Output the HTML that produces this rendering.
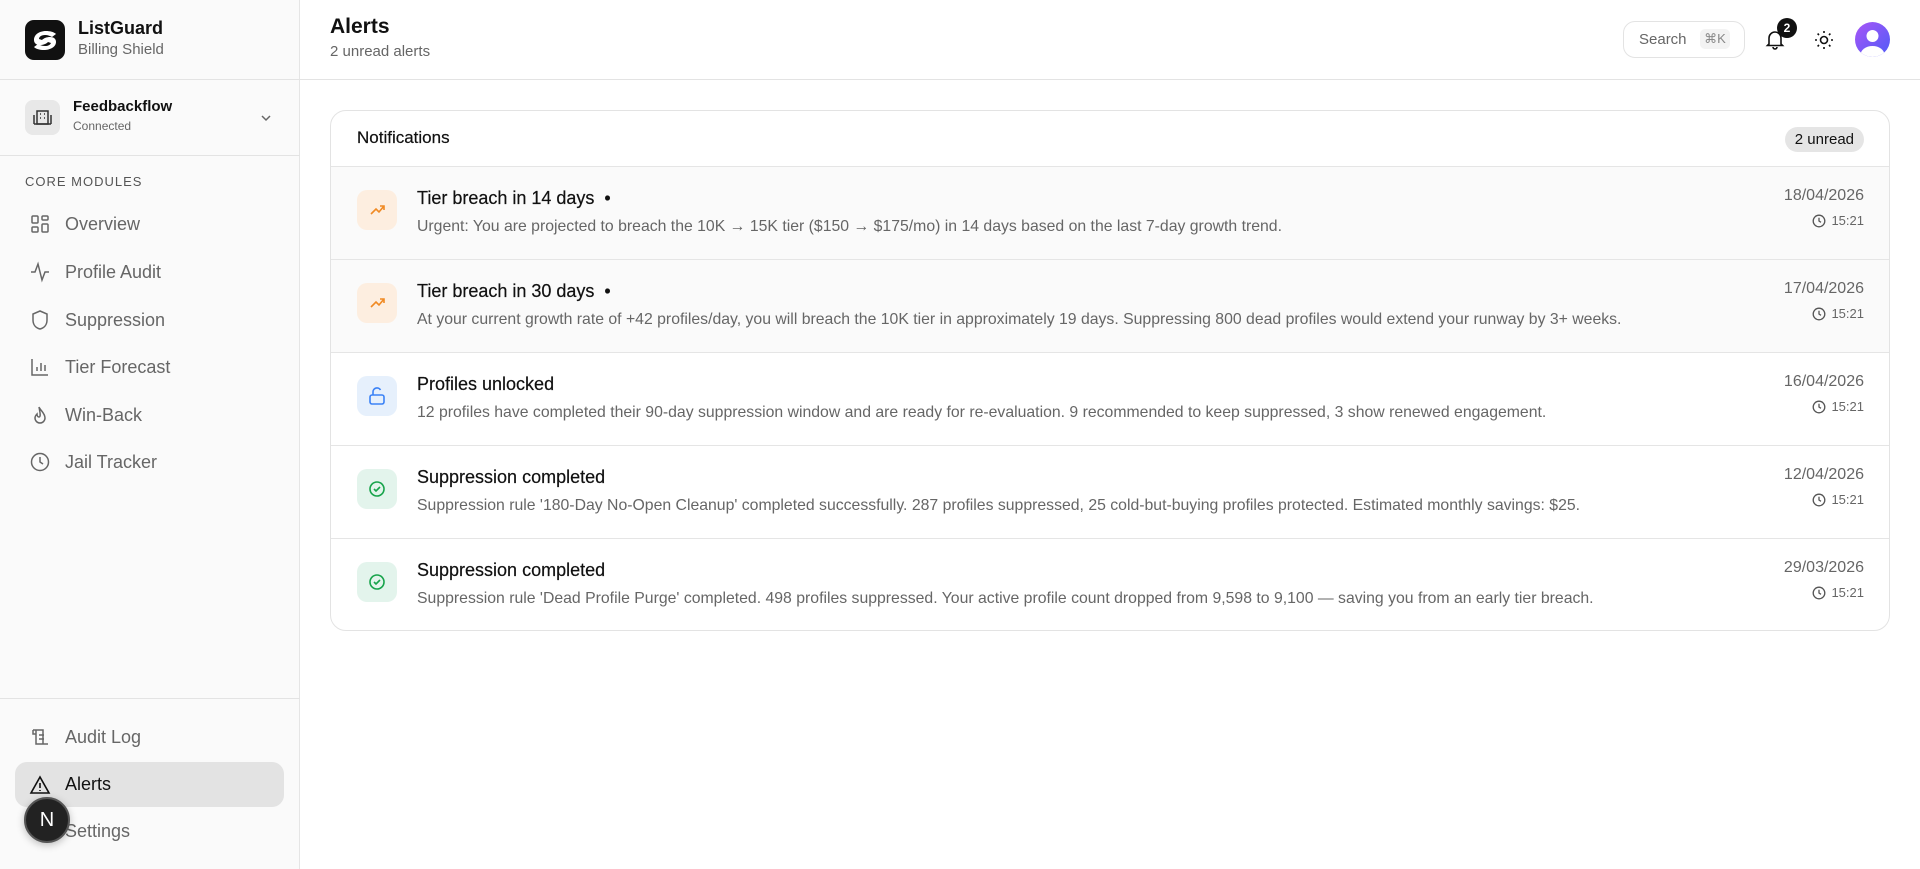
<!DOCTYPE html>
<html><head><meta charset="utf-8"><style>
*{box-sizing:border-box;margin:0;padding:0}
body{width:1920px;height:869px;overflow:hidden;font-family:"Liberation Sans",sans-serif;background:#fff;color:#111;position:relative}
.side{position:absolute;left:0;top:0;width:300px;height:869px;background:#fafafa;border-right:1px solid #e5e5e5}
.hline{position:absolute;left:0;height:1px;background:#e3e3e3}
.logo{position:absolute;left:25px;top:20px;width:40px;height:40px;background:#111;border-radius:9px}
.t1{position:absolute;font-size:18px;font-weight:bold;left:78px;top:18px}
.t2{position:absolute;font-size:15px;color:#666;left:78px;top:41px}
.ws{position:absolute;left:25px;top:100px;width:35px;height:35px;background:#e8e8e8;border-radius:8px}
.nav{position:absolute;left:65px;font-size:18px;color:#666}
.ic{position:absolute;left:29px;width:22px;height:22px}
.main-h1{position:absolute;left:330px;top:15px;font-size:21px;font-weight:bold}
.main-sub{position:absolute;left:330px;top:43px;font-size:15px;color:#666}
.card{position:absolute;left:330px;top:110px;width:1560px;height:521px;border:1px solid #e3e3e3;border-radius:16px;overflow:hidden}
.row{position:absolute;left:0;width:100%;height:93px;border-top:1px solid #e5e5e5}
.ibox{position:absolute;left:26px;top:23px;width:40px;height:40px;border-radius:10px}
.rt{position:absolute;left:86px;top:21px;font-size:18px;color:#111;-webkit-text-stroke:0.2px #111}
.rd{position:absolute;left:86px;top:51px;font-size:15.8px;color:#666;white-space:nowrap}
.date{position:absolute;right:25px;top:20px;font-size:16px;color:#666}
.time{position:absolute;right:25px;top:46px;font-size:13px;color:#666;display:flex;align-items:center;gap:5px}
</style></head><body>
<div class="side">
<div class="logo"><svg width="40" height="40" viewBox="0 0 40 40"><path d="M9 20c0-6 6-9 12-9 4 0 8 1 10 3l-4 3c-2-1-4-2-7-2-4 0-6 2-6 4l3 1c2-2 5-3 8-3 4 0 6 2 6 5 0 5-6 8-12 8-4 0-8-1-10-3l4-3c2 1 4 2 7 2 3 0 5-1 6-3l-3-1c-2 2-5 3-8 3-4 0-6-2-6-5z" fill="#fff"/></svg></div>
<div class="t1">ListGuard</div><div class="t2">Billing Shield</div>
<div class="hline" style="top:79px;width:300px"></div>
<div class="ws"><svg width="35" height="35" viewBox="0 0 35 35" fill="none" stroke="#333" stroke-width="1.5"><rect x="12" y="11" width="11" height="13"/><path d="M9 24h17M9 15v9M26 15v9M15 14h1M19 14h1M15 18h1M19 18h1"/></svg></div>
<div style="position:absolute;left:73px;top:98px;font-size:15px;font-weight:bold">Feedbackflow</div>
<div style="position:absolute;left:73px;top:119px;font-size:12px;color:#666">Connected</div>
<svg style="position:absolute;left:259px;top:111px" width="14" height="14" viewBox="0 0 14 14" fill="none" stroke="#666" stroke-width="1.5"><path d="M3 5l4 4 4-4"/></svg>
<div class="hline" style="top:155px;width:300px"></div>
<div style="position:absolute;left:25px;top:174px;font-size:13px;color:#555;letter-spacing:1px">CORE MODULES</div>
<svg class="ic" style="top:213px" viewBox="0 0 22 22" fill="none" stroke="#666" stroke-width="1.5"><rect x="3" y="3" width="6" height="7" rx="1"/><rect x="13" y="3" width="6" height="4" rx="1"/><rect x="13" y="11" width="6" height="8" rx="1"/><rect x="3" y="14" width="6" height="5" rx="1"/></svg>
<div class="nav" style="top:214px">Overview</div>
<svg class="ic" style="top:261px" viewBox="0 0 22 22" fill="none" stroke="#666" stroke-width="1.5"><path d="M2 11h4l3-8 4 16 3-8h4"/></svg>
<div class="nav" style="top:262px">Profile Audit</div>
<svg class="ic" style="top:309px" viewBox="0 0 22 22" fill="none" stroke="#666" stroke-width="1.5"><path d="M11 2l7 3v6c0 5-3 8-7 9-4-1-7-4-7-9V5z"/></svg>
<div class="nav" style="top:310px">Suppression</div>
<svg class="ic" style="top:356px" viewBox="0 0 22 22" fill="none" stroke="#666" stroke-width="1.5"><path d="M3 3v16h16M8 15v-4M12 15V7M16 15v-6"/></svg>
<div class="nav" style="top:357px">Tier Forecast</div>
<svg class="ic" style="top:404px" viewBox="0 0 22 22" fill="none" stroke="#666" stroke-width="1.5"><path d="M10 3c1 3 6 6 6 11a5 5 0 0 1-10 0c0-2 1-3 2-4 0 2 1 3 2 3 2 0 1-5 0-10z"/></svg>
<div class="nav" style="top:405px">Win-Back</div>
<svg class="ic" style="top:451px" viewBox="0 0 22 22" fill="none" stroke="#666" stroke-width="1.5"><circle cx="11" cy="11" r="8.5"/><path d="M11 6v5l3 2"/></svg>
<div class="nav" style="top:452px">Jail Tracker</div>
<div class="hline" style="top:698px;width:300px"></div>
<svg class="ic" style="top:726px" viewBox="0 0 22 22" fill="none" stroke="#666" stroke-width="1.5"><path d="M4 4h10v14h5M7 4v14h12M4 4v4h3M10 9h5M10 13h5"/></svg>
<div class="nav" style="top:727px">Audit Log</div>
<div style="position:absolute;left:15px;top:762px;width:269px;height:45px;background:#e3e3e3;border-radius:12px"></div>
<svg class="ic" style="top:774px" viewBox="0 0 22 22" fill="none" stroke="#111" stroke-width="1.6"><path d="M11 3L2 19h18z M11 9v5M11 16v1"/></svg>
<div class="nav" style="top:774px;color:#111">Alerts</div>
<div class="nav" style="top:821px">Settings</div>
<div style="position:absolute;left:24px;top:797px;width:46px;height:46px;border-radius:50%;background:#222;border:2px solid #555;color:#fff;font-size:20px;text-align:center;line-height:42px;box-shadow:0 2px 8px rgba(0,0,0,.25)">N</div>
</div>

<div class="main-h1">Alerts</div>
<div class="main-sub">2 unread alerts</div>
<div class="hline" style="top:79px;left:300px;width:1620px"></div>
<div style="position:absolute;left:1623px;top:21px;width:122px;height:37px;border:1px solid #e3e3e3;border-radius:12px">
<span style="position:absolute;left:15px;top:9px;font-size:15px;color:#666">Search</span>
<span style="position:absolute;left:76px;top:7px;width:30px;height:20px;background:#f3f3f3;border-radius:5px;font-size:13px;color:#888;text-align:center;line-height:20px">⌘K</span></div>
<svg style="position:absolute;left:1764px;top:28px" width="22" height="22" viewBox="0 0 22 22" fill="none" stroke="#111" stroke-width="1.6"><path d="M5 16V10a6 6 0 0 1 12 0v6l1.5 1.5h-15zM9 19a2 2 0 0 0 4 0"/></svg>
<div style="position:absolute;left:1777px;top:18px;width:20px;height:20px;border-radius:50%;background:#111;color:#fff;font-size:12px;font-weight:bold;text-align:center;line-height:20px">2</div>
<svg style="position:absolute;left:1813px;top:29px" width="22" height="22" viewBox="0 0 22 22" fill="none" stroke="#111" stroke-width="1.6"><circle cx="11" cy="11" r="3.5"/><path d="M11 2v2M11 18v2M2 11h2M18 11h2M4.6 4.6l1.4 1.4M16 16l1.4 1.4M4.6 17.4L6 16M16 6l1.4-1.4"/></svg>
<svg style="position:absolute;left:1855px;top:22px" width="35" height="35" viewBox="0 0 35 35"><defs><linearGradient id="g" x1="0" y1="0" x2="1" y2="1"><stop offset="0" stop-color="#a855f7"/><stop offset="1" stop-color="#4f5cf7"/></linearGradient><clipPath id="c"><circle cx="17.5" cy="17.5" r="17.5"/></clipPath></defs><circle cx="17.5" cy="17.5" r="17.5" fill="url(#g)"/><g clip-path="url(#c)" fill="#fff"><circle cx="17.5" cy="14" r="6"/><ellipse cx="17.5" cy="33" rx="12" ry="9"/></g></svg>

<div class="card">
<div style="position:absolute;left:26px;top:17px;font-size:17px;-webkit-text-stroke:0.2px #111">Notifications</div>
<div style="position:absolute;right:25px;top:16px;height:25px;padding:0 10px;background:#e5e5e5;border-radius:13px;font-size:15px;line-height:25px">2 unread</div>

<div class="row" style="top:55px;background:#fafafa">
<div class="ibox" style="background:#fdeee0"><svg width="40" height="40" viewBox="0 0 40 40" fill="none" stroke="#f08a24" stroke-width="1.6"><path d="M14 24l5-5 3 3 5-6M23 16h4v4"/></svg></div>
<div class="rt">Tier breach in 14 days &nbsp;•</div>
<div class="rd">Urgent: You are projected to breach the 10K → 15K tier ($150 → $175/mo) in 14 days based on the last 7-day growth trend.</div>
<div class="date">18/04/2026</div><div class="time"><svg width="14" height="14" viewBox="0 0 14 14" fill="none" stroke="#555" stroke-width="1.3"><circle cx="7" cy="7" r="5.8"/><path d="M7 3.8V7l2 1.3"/></svg>15:21</div></div>

<div class="row" style="top:148px;background:#fafafa">
<div class="ibox" style="background:#fdeee0"><svg width="40" height="40" viewBox="0 0 40 40" fill="none" stroke="#f08a24" stroke-width="1.6"><path d="M14 24l5-5 3 3 5-6M23 16h4v4"/></svg></div>
<div class="rt">Tier breach in 30 days &nbsp;•</div>
<div class="rd">At your current growth rate of +42 profiles/day, you will breach the 10K tier in approximately 19 days. Suppressing 800 dead profiles would extend your runway by 3+ weeks.</div>
<div class="date">17/04/2026</div><div class="time"><svg width="14" height="14" viewBox="0 0 14 14" fill="none" stroke="#555" stroke-width="1.3"><circle cx="7" cy="7" r="5.8"/><path d="M7 3.8V7l2 1.3"/></svg>15:21</div></div>

<div class="row" style="top:241px">
<div class="ibox" style="background:#e6f0fc"><svg width="40" height="40" viewBox="0 0 40 40" fill="none" stroke="#3b82f6" stroke-width="1.6"><rect x="13" y="19" width="14" height="9" rx="2"/><path d="M16 19v-3a4 4 0 0 1 7.5-2"/></svg></div>
<div class="rt">Profiles unlocked</div>
<div class="rd">12 profiles have completed their 90-day suppression window and are ready for re-evaluation. 9 recommended to keep suppressed, 3 show renewed engagement.</div>
<div class="date">16/04/2026</div><div class="time"><svg width="14" height="14" viewBox="0 0 14 14" fill="none" stroke="#555" stroke-width="1.3"><circle cx="7" cy="7" r="5.8"/><path d="M7 3.8V7l2 1.3"/></svg>15:21</div></div>

<div class="row" style="top:334px">
<div class="ibox" style="background:#e3f4ec"><svg width="40" height="40" viewBox="0 0 40 40" fill="none" stroke="#16a34a" stroke-width="1.6"><circle cx="20" cy="20" r="7"/><path d="M17 20l2 2 4-4"/></svg></div>
<div class="rt">Suppression completed</div>
<div class="rd">Suppression rule '180-Day No-Open Cleanup' completed successfully. 287 profiles suppressed, 25 cold-but-buying profiles protected. Estimated monthly savings: $25.</div>
<div class="date">12/04/2026</div><div class="time"><svg width="14" height="14" viewBox="0 0 14 14" fill="none" stroke="#555" stroke-width="1.3"><circle cx="7" cy="7" r="5.8"/><path d="M7 3.8V7l2 1.3"/></svg>15:21</div></div>

<div class="row" style="top:427px">
<div class="ibox" style="background:#e3f4ec"><svg width="40" height="40" viewBox="0 0 40 40" fill="none" stroke="#16a34a" stroke-width="1.6"><circle cx="20" cy="20" r="7"/><path d="M17 20l2 2 4-4"/></svg></div>
<div class="rt">Suppression completed</div>
<div class="rd">Suppression rule 'Dead Profile Purge' completed. 498 profiles suppressed. Your active profile count dropped from 9,598 to 9,100 — saving you from an early tier breach.</div>
<div class="date">29/03/2026</div><div class="time"><svg width="14" height="14" viewBox="0 0 14 14" fill="none" stroke="#555" stroke-width="1.3"><circle cx="7" cy="7" r="5.8"/><path d="M7 3.8V7l2 1.3"/></svg>15:21</div></div>
</div>
</body></html>
